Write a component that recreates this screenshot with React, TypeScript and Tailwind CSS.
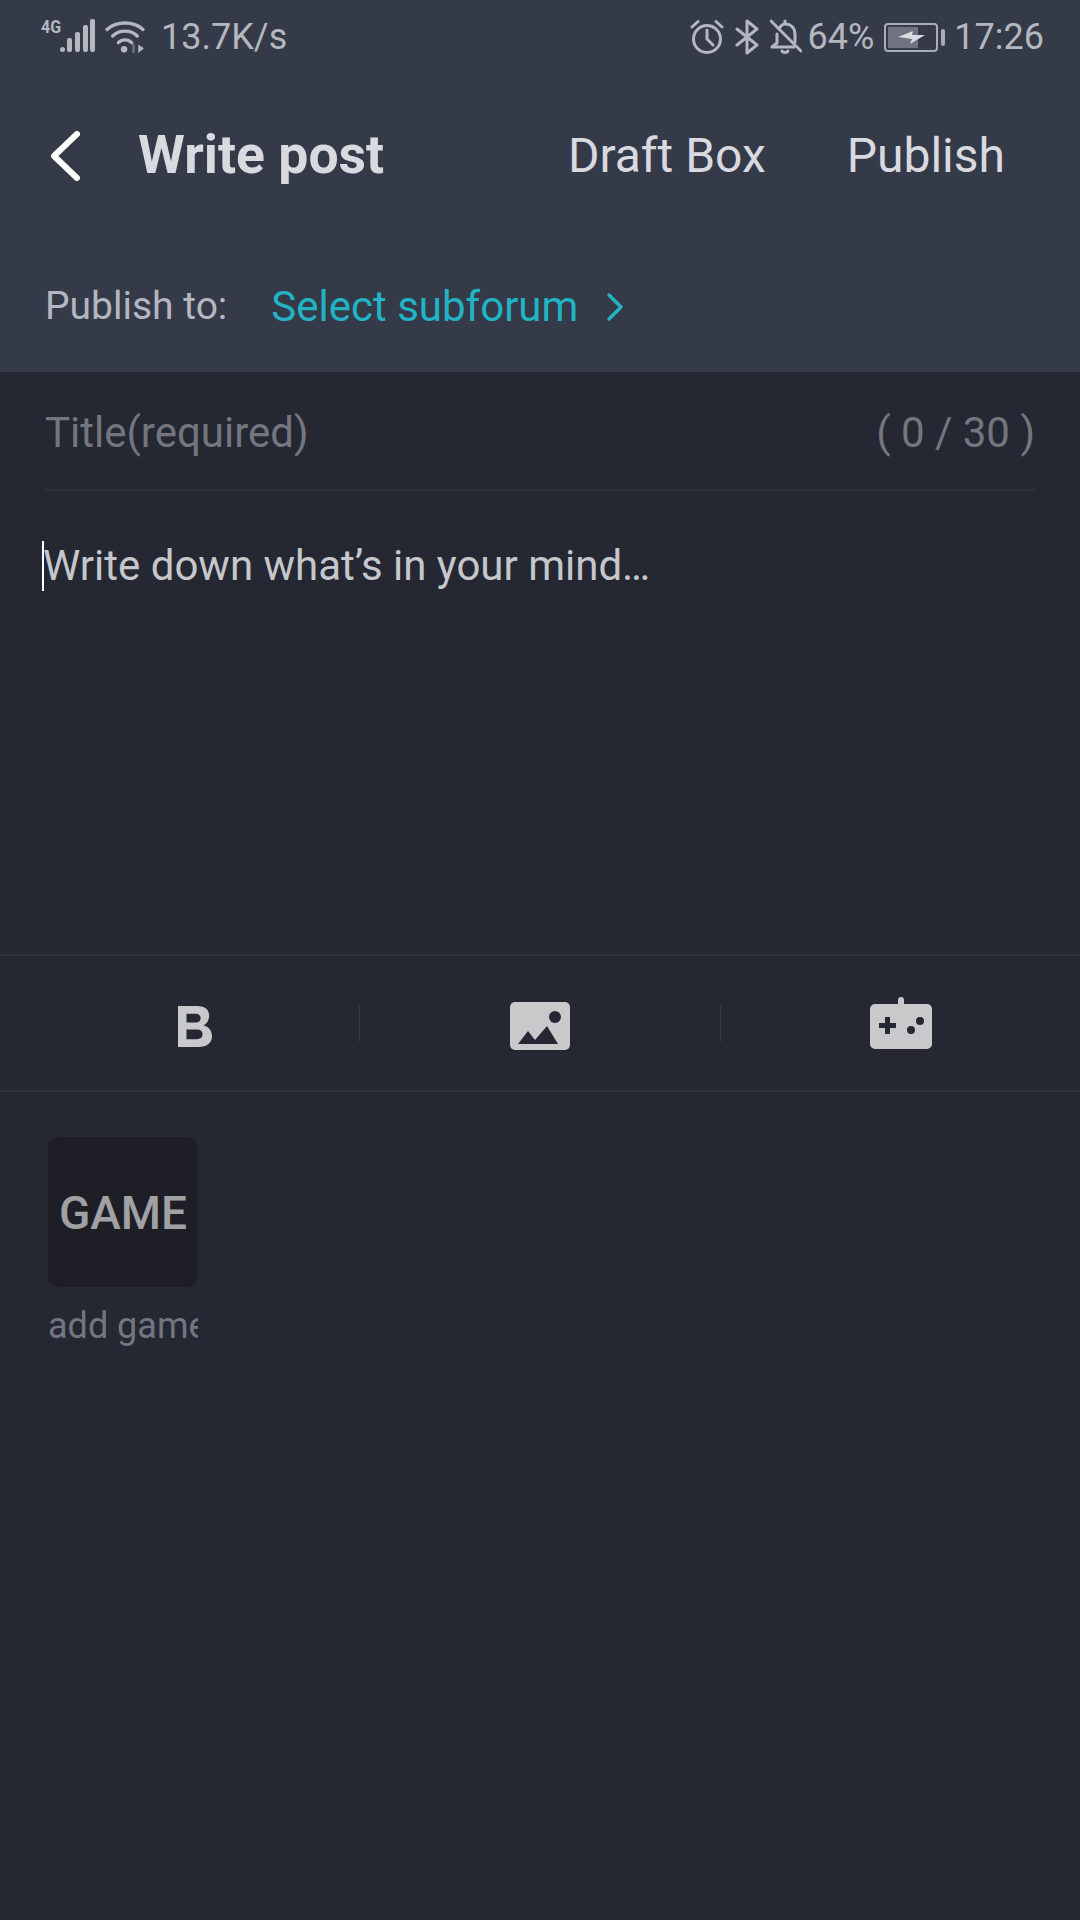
import React from 'react';

function SignalIcon() {
  return (
    <svg width="58" height="54" viewBox="0 0 58 54" fill="#b4b7c0">
      <text x="0" y="23" fontSize="18" fontWeight="700" fontFamily="Roboto, sans-serif" textLength="20" lengthAdjust="spacingAndGlyphs">4G</text>
      <rect x="19" y="37" width="5" height="5" rx="2.5" />
      <rect x="26" y="28" width="5" height="14" rx="2" />
      <rect x="34" y="22" width="5" height="20" rx="2" />
      <rect x="42" y="15" width="5" height="27" rx="2" />
      <rect x="49" y="9" width="5" height="33" rx="2" />
    </svg>
  );
}

function WifiIcon() {
  return (
    <svg width="40" height="34" viewBox="0 0 42 36" fill="none" stroke="#b4b7c0" strokeWidth="3.6" strokeLinecap="round">
      <path d="M2 10C12 1 30 1 40 10" />
      <path d="M8 17C15 10 27 10 34 17" />
      <path d="M14 24C18 20 24 20 28 24" />
      <circle cx="20" cy="31" r="3.400" fill="#b4b7c0" stroke="none" />
      <path d="M30 26v8" stroke="#6f7380" strokeWidth="2.500" />
      <path d="M35 26v9l6-5z" fill="#b4b7c0" stroke="none" />
    </svg>
  );
}

function AlarmIcon() {
  return (
    <svg width="34" height="36" viewBox="0 0 34 36" fill="none" stroke="#b4b7c0" strokeWidth="3" strokeLinecap="round">
      <circle cx="17" cy="20" r="13.5" />
      <path d="M17 11v9l6 6" />
      <path d="M2 8l6-5.5M32 8l-6-5.5" />
    </svg>
  );
}

function BluetoothIcon() {
  return (
    <svg width="24" height="36" viewBox="0 0 24 36" fill="none" stroke="#b4b7c0" strokeWidth="3" strokeLinecap="round" strokeLinejoin="round">
      <path d="M2 10l20 16-10 8V2l10 8-20 16" />
    </svg>
  );
}

function BellOffIcon() {
  return (
    <svg width="32" height="36" viewBox="0 0 32 36" fill="none" stroke="#b4b7c0" strokeWidth="3" strokeLinecap="round" strokeLinejoin="round">
      <path d="M9 10C11 6 13 5 15 5V2M15 5c6 0 10 4 10 11v7" />
      <path d="M7 15v9l-5 4h22" />
      <path d="M12 32c1 2 5 2 6 0" />
      <path d="M1 2l30 30" />
    </svg>
  );
}

function BatteryIcon() {
  return (
    <div className="flex items-center gap-[3px]">
      <div className="w-[54px] h-[29px] rounded-[4px] border-2 border-[#a9acb6] p-[2px]">
        <div className="relative h-full w-[64%] bg-[#6f7280]">
          <svg className="absolute left-[10px] top-[2px]" width="28" height="17" viewBox="0 0 28 17" fill="#d9dbe0">
            <path d="M0 8L15 2l-1 4h13L12 15l2-5z" />
          </svg>
        </div>
      </div>
      <div className="w-[4px] h-[17px] rounded-[2px] bg-[#a9acb6]" />
    </div>
  );
}

function ToolDivider() {
  return <div className="w-px h-[38px] bg-[#33363f]" />;
}

export default function App() {
  return (
    <div className="w-[1080px] h-[1920px] bg-[#252833] font-['Roboto',sans-serif] overflow-hidden">
      {/* entete */}
      <div className="h-[372px] bg-[#353a48] flex flex-col">
        <div className="h-[74px] pl-[41px] pr-[36px] flex items-center justify-between text-[36px] text-[#b4b7c0]">
          <div className="flex items-center">
            <SignalIcon />
            <div className="ml-[6px]"><WifiIcon /></div>
            <span className="ml-[16px]">13.7K/s</span>
          </div>
          <div className="flex items-center">
            <AlarmIcon />
            <div className="ml-[11px]"><BluetoothIcon /></div>
            <div className="ml-[11px]"><BellOffIcon /></div>
            <span className="ml-[6px]">64%</span>
            <div className="ml-[10px]"><BatteryIcon /></div>
            <span className="ml-[9px]">17:26</span>
          </div>
        </div>
        <div className="h-[162px] pl-[50px] pr-[75px] pt-[2px] flex items-center text-[#d8dae0]">
          <svg width="30" height="50" viewBox="0 0 30 50" fill="none" stroke="#ffffff" strokeWidth="6" strokeLinecap="round" strokeLinejoin="round">
            <path d="M27 3L4 25l23 22" />
          </svg>
          <span className="ml-[58px] text-[53.500px] leading-[60px] font-bold -mt-[2px]">Write post</span>
          <span className="ml-auto text-[48px]">Draft Box</span>
          <span className="ml-[81px] text-[48px]">Publish</span>
        </div>
        <div className="flex-1 pl-[45px] flex items-center pt-[5px]">
          <span className="text-[39px] text-[#b4b7c0]">Publish to:</span>
          <span className="ml-[44px] text-[42px] text-[#22b3c4]">Select subforum</span>
          <svg className="ml-[28px]" width="18" height="30" viewBox="0 0 18 30" fill="none" stroke="#22b3c4" strokeWidth="3.5" strokeLinecap="round" strokeLinejoin="round">
            <path d="M3 3l12 12L3 27" />
          </svg>
        </div>
      </div>

      {/* titre */}
      <div className="mx-[45px] h-[119px] border-b-2 border-[#2f323c] flex items-center justify-between pt-[4px] text-[42px] text-[#73767f]">
        <span>Title(required)</span>
        <span>( 0 / 30 )</span>
      </div>

      {/* contenu */}
      <div className="h-[463px] pl-[42px] pt-[50px]">
        <div className="flex items-center h-[50px]">
          <div className="w-[2px] h-[50px] bg-white" />
          <span className="text-[42px] text-[#c6c7cb] -ml-[1px] -mt-[2px]">Write down what’s in your mind…</span>
        </div>
      </div>

      {/* barre d'outils */}
      <div className="h-[138px] border-y-2 border-[#2f323c] flex items-center">
        <div className="w-[359px] flex justify-center pl-[31px] pt-[6px]">
          <svg width="34" height="43" viewBox="0 0 36 44" preserveAspectRatio="none" fill="#c9c9cb">
            <path fillRule="evenodd" d="M0 1h20c9 0 13 4 13 10 0 4-2 8-6 10 5 1 9 5 9 11 0 7-6 11-14 11H0zM9 9v9h10c3 0 5-2 5-4.500S22 9 19 9zM9 25v10h11c4 0 6-2 6-5s-2-5-6-5z" />
          </svg>
        </div>
        <ToolDivider />
        <div className="flex-1 flex justify-center pt-[5px]">
          <svg width="60" height="48" viewBox="0 0 60 48">
            <rect width="60" height="48" rx="5" fill="#c9c9cb" />
            <circle cx="45" cy="15" r="6" fill="#252833" />
            <path d="M8 42L18 29l7 9L37 24l11 18z" fill="#252833" />
          </svg>
        </div>
        <ToolDivider />
        <div className="w-[359px] flex justify-center">
          <svg width="62" height="52" viewBox="0 0 62 52">
            <path d="M28 7V3a3 3 0 0 1 6 0v4h23a5 5 0 0 1 5 5v35a5 5 0 0 1-5 5H5a5 5 0 0 1-5-5V12a5 5 0 0 1 5-5z" fill="#c9c9cb" />
            <path d="M15 20h5v6h6v5h-6v6h-5v-6H9v-5h6z" fill="#252833" />
            <circle cx="50" cy="24" r="4" fill="#252833" />
            <circle cx="41" cy="33" r="4" fill="#252833" />
          </svg>
        </div>
      </div>

      {/* jeu */}
      <div className="pl-[48px] pt-[45px]">
        <div className="w-[150px] h-[150px] rounded-[10px] bg-[#1d1e26] flex items-center justify-center pt-[2px] text-[46px] font-medium text-[#a1a1a3]">
          GAME
        </div>
        <div className="mt-[12px] w-[150px] overflow-hidden whitespace-nowrap text-[36px] text-[#73767f]">
          add game
        </div>
      </div>
    </div>
  );
}
